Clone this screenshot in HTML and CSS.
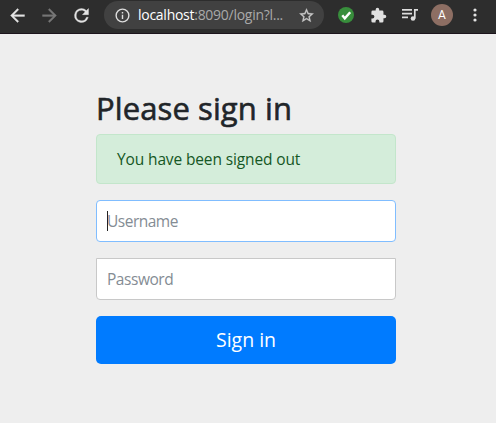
FILE: index.html
```html
<!DOCTYPE html>
<html lang="en">
<head>
<meta charset="utf-8">
<title>Please sign in</title>
<link rel="stylesheet" href="styles.css">
</head>
<body>
<header class="toolbar">
  <nav class="nav">
    <svg class="icon" viewBox="0 0 24 24"><path d="M20 11H7.83l5.59-5.59L12 4l-8 8 8 8 1.41-1.41L7.83 13H20z"/></svg>
    <svg class="icon disabled" viewBox="0 0 24 24"><path d="M12 4l-1.41 1.41L16.17 11H4v2h12.17l-5.58 5.59L12 20l8-8z"/></svg>
    <svg class="icon" viewBox="0 0 24 24"><path d="M17.65 6.35A7.96 7.96 0 0 0 12 4a8 8 0 1 0 7.73 10h-2.08A6 6 0 1 1 12 6c1.66 0 3.14.69 4.22 1.78L13 11h7V4z"/></svg>
  </nav>
  <div class="address">
    <svg class="info" viewBox="0 0 24 24"><path d="M11 17h2v-6h-2zm1-15a10 10 0 1 0 0 20 10 10 0 0 0 0-20zm0 18a8 8 0 1 1 0-16 8 8 0 0 1 0 16zM11 9h2V7h-2z"/></svg>
    <span class="url"><span class="host">localhost</span>:8090/login?l...</span>
    <svg class="star" viewBox="0 0 24 24"><path d="M22 9.24l-7.19-.62L12 2 9.19 8.63 2 9.24l5.46 4.73L5.82 21 12 17.27 18.18 21l-1.63-7.03zM12 15.4l-3.76 2.27 1-4.28-3.32-2.88 4.38-.38L12 6.1l1.71 4.04 4.38.38-3.32 2.88 1 4.28z"/></svg>
  </div>
  <div class="actions">
    <svg class="check" viewBox="0 0 16 16"><circle cx="8" cy="8" r="8"/><path d="M4.3 8.2l2.5 3.2 5.4-6.2"/></svg>
    <svg class="puzzle" viewBox="0 0 24 24"><path d="M20.5 11H19V7a2 2 0 0 0-2-2h-4V3.500a2.500 2.500 0 0 0-5 0V5H4a2 2 0 0 0-2 2v3.800h1.500a2.700 2.700 0 0 1 0 5.400H2V20a2 2 0 0 0 2 2h3.800v-1.500a2.700 2.700 0 0 1 5.400 0V22H17a2 2 0 0 0 2-2v-4h1.500a2.500 2.500 0 0 0 0-5z"/></svg>
    <svg class="music" viewBox="0 0 18 14"><path d="M1 1.900h10M1 5.600h10M1 9.300h6M13.800 10.500V1.900H17"/><circle cx="12" cy="10.500" r="2.300"/></svg>
    <span class="avatar">A</span>
    <svg class="dots" viewBox="0 0 4 14"><circle cx="2" cy="2" r="1.600"/><circle cx="2" cy="7" r="1.600"/><circle cx="2" cy="12" r="1.600"/></svg>
  </div>
</header>
<main class="page">
  <form class="signin">
    <h2 class="title"><span class="title-text">Please sign in</span></h2>
    <div class="alert"><span class="alert-text">You have been signed out</span></div>
    <label class="field focused"><i class="caret"></i><span class="username">Username</span></label>
    <label class="field"><span class="password">Password</span></label>
    <button class="submit" type="button"><span class="submit-text">Sign in</span></button>
  </form>
</main>
</body>
</html>
```
FILE: styles.css
```css
* { box-sizing: border-box; }
body {
  margin: 0;
  height: 423px;
  overflow: hidden;
  background: #eee;
  color: #212529;
  font: 16px/24px "Open Sans", "Noto Sans", sans-serif;
}
svg { display: block; flex: none; }
.toolbar {
  display: flex;
  align-items: flex-start;
  height: 34px;
  background: #2d2d2d;
  border-bottom: 1px solid #1c151c;
}
.nav {
  display: flex;
  align-items: center;
  gap: 11px;
  height: 30px;
  padding-left: 7px;
  width: 104px;
}
.icon { width: 21px; height: 21px; fill: #e3e3e3; stroke: #e3e3e3; stroke-width: 0.4; }
.disabled { fill: #777; stroke: #777; }
.address {
  display: flex;
  align-items: center;
  width: 220px;
  height: 28px;
  margin-top: 1px;
  padding: 0 9px 0 10px;
  border-radius: 14px;
  background: #414141;
}
.info { width: 17px; height: 17px; fill: #ddd; }
.url {
  flex: 1;
  margin-left: 7px;
  color: #a9a9a9;
  font-size: 14px;
  line-height: 20px;
  letter-spacing: -0.27px;
  white-space: nowrap;
}
.host { color: #fff; }
.star { width: 17px; height: 17px; fill: #c8c8c8; stroke: #c8c8c8; stroke-width: 0.4; }
.actions {
  display: flex;
  align-items: center;
  height: 30px;
  padding-left: 14px;
}
.check { width: 16px; height: 16px; fill: #388e3c; }
.check path { fill: none; stroke: #fff; stroke-width: 2.4; }
.puzzle { width: 17px; height: 17px; margin-left: 16px; fill: #e0e0e0; }
.music { width: 18px; height: 14px; margin-left: 14px; fill: #ddd; }
.music path { fill: none; stroke: #ddd; stroke-width: 1.7; }
.avatar {
  width: 22px;
  height: 22px;
  margin-left: 12px;
  border-radius: 50%;
  background: #8d6e63;
  color: #fff;
  font: 12px/22px Roboto, sans-serif;
  text-align: center;
}
.dots { width: 4px; height: 14px; margin-left: 20px; fill: #e3e3e3; }
.page { padding-top: 55px; }
.signin { width: 300px; margin: 0 auto 0 96px; }
.title {
  margin: 0 0 7px;
  font-size: 31px;
  font-weight: 500;
  line-height: 38px;
  white-space: nowrap;
}
.alert {
  height: 50px;
  margin-bottom: 16px;
  padding: 12px 20px;
  border: 1px solid #c3e6cb;
  border-radius: 4px;
  background: #d4edda;
  color: #155724;
  white-space: nowrap;
}
.field {
  display: flex;
  align-items: center;
  height: 42px;
  margin-bottom: 16px;
  padding: 0 10px;
  border: 1px solid #c8c8c8;
  border-radius: 0 0 4px 4px;
  background: #fff;
  color: #848c94;
}
.focused { border-color: #80bdff; border-radius: 4px; }
.caret { width: 1px; height: 20px; margin-right: -1px; background: #222; }
.submit {
  display: block;
  width: 100%;
  height: 48px;
  padding: 0;
  border: 0;
  border-radius: 5px;
  background: #007bff;
  color: #fff;
  font: 20px/30px "Open Sans", "Noto Sans", sans-serif;
}
.title-text {
  letter-spacing: 0.1px;
  -webkit-text-stroke: 0.6px #212529;
}
.alert-text { font-size: 15.5px; letter-spacing: -0.13px; }
.username { font-size: 15.5px; letter-spacing: -0.5px; }
.password { font-size: 15.5px; letter-spacing: -0.5px; }
.password { letter-spacing: -0.45px; }
.submit-text { font-size: 19.5px; letter-spacing: 0; }
```
